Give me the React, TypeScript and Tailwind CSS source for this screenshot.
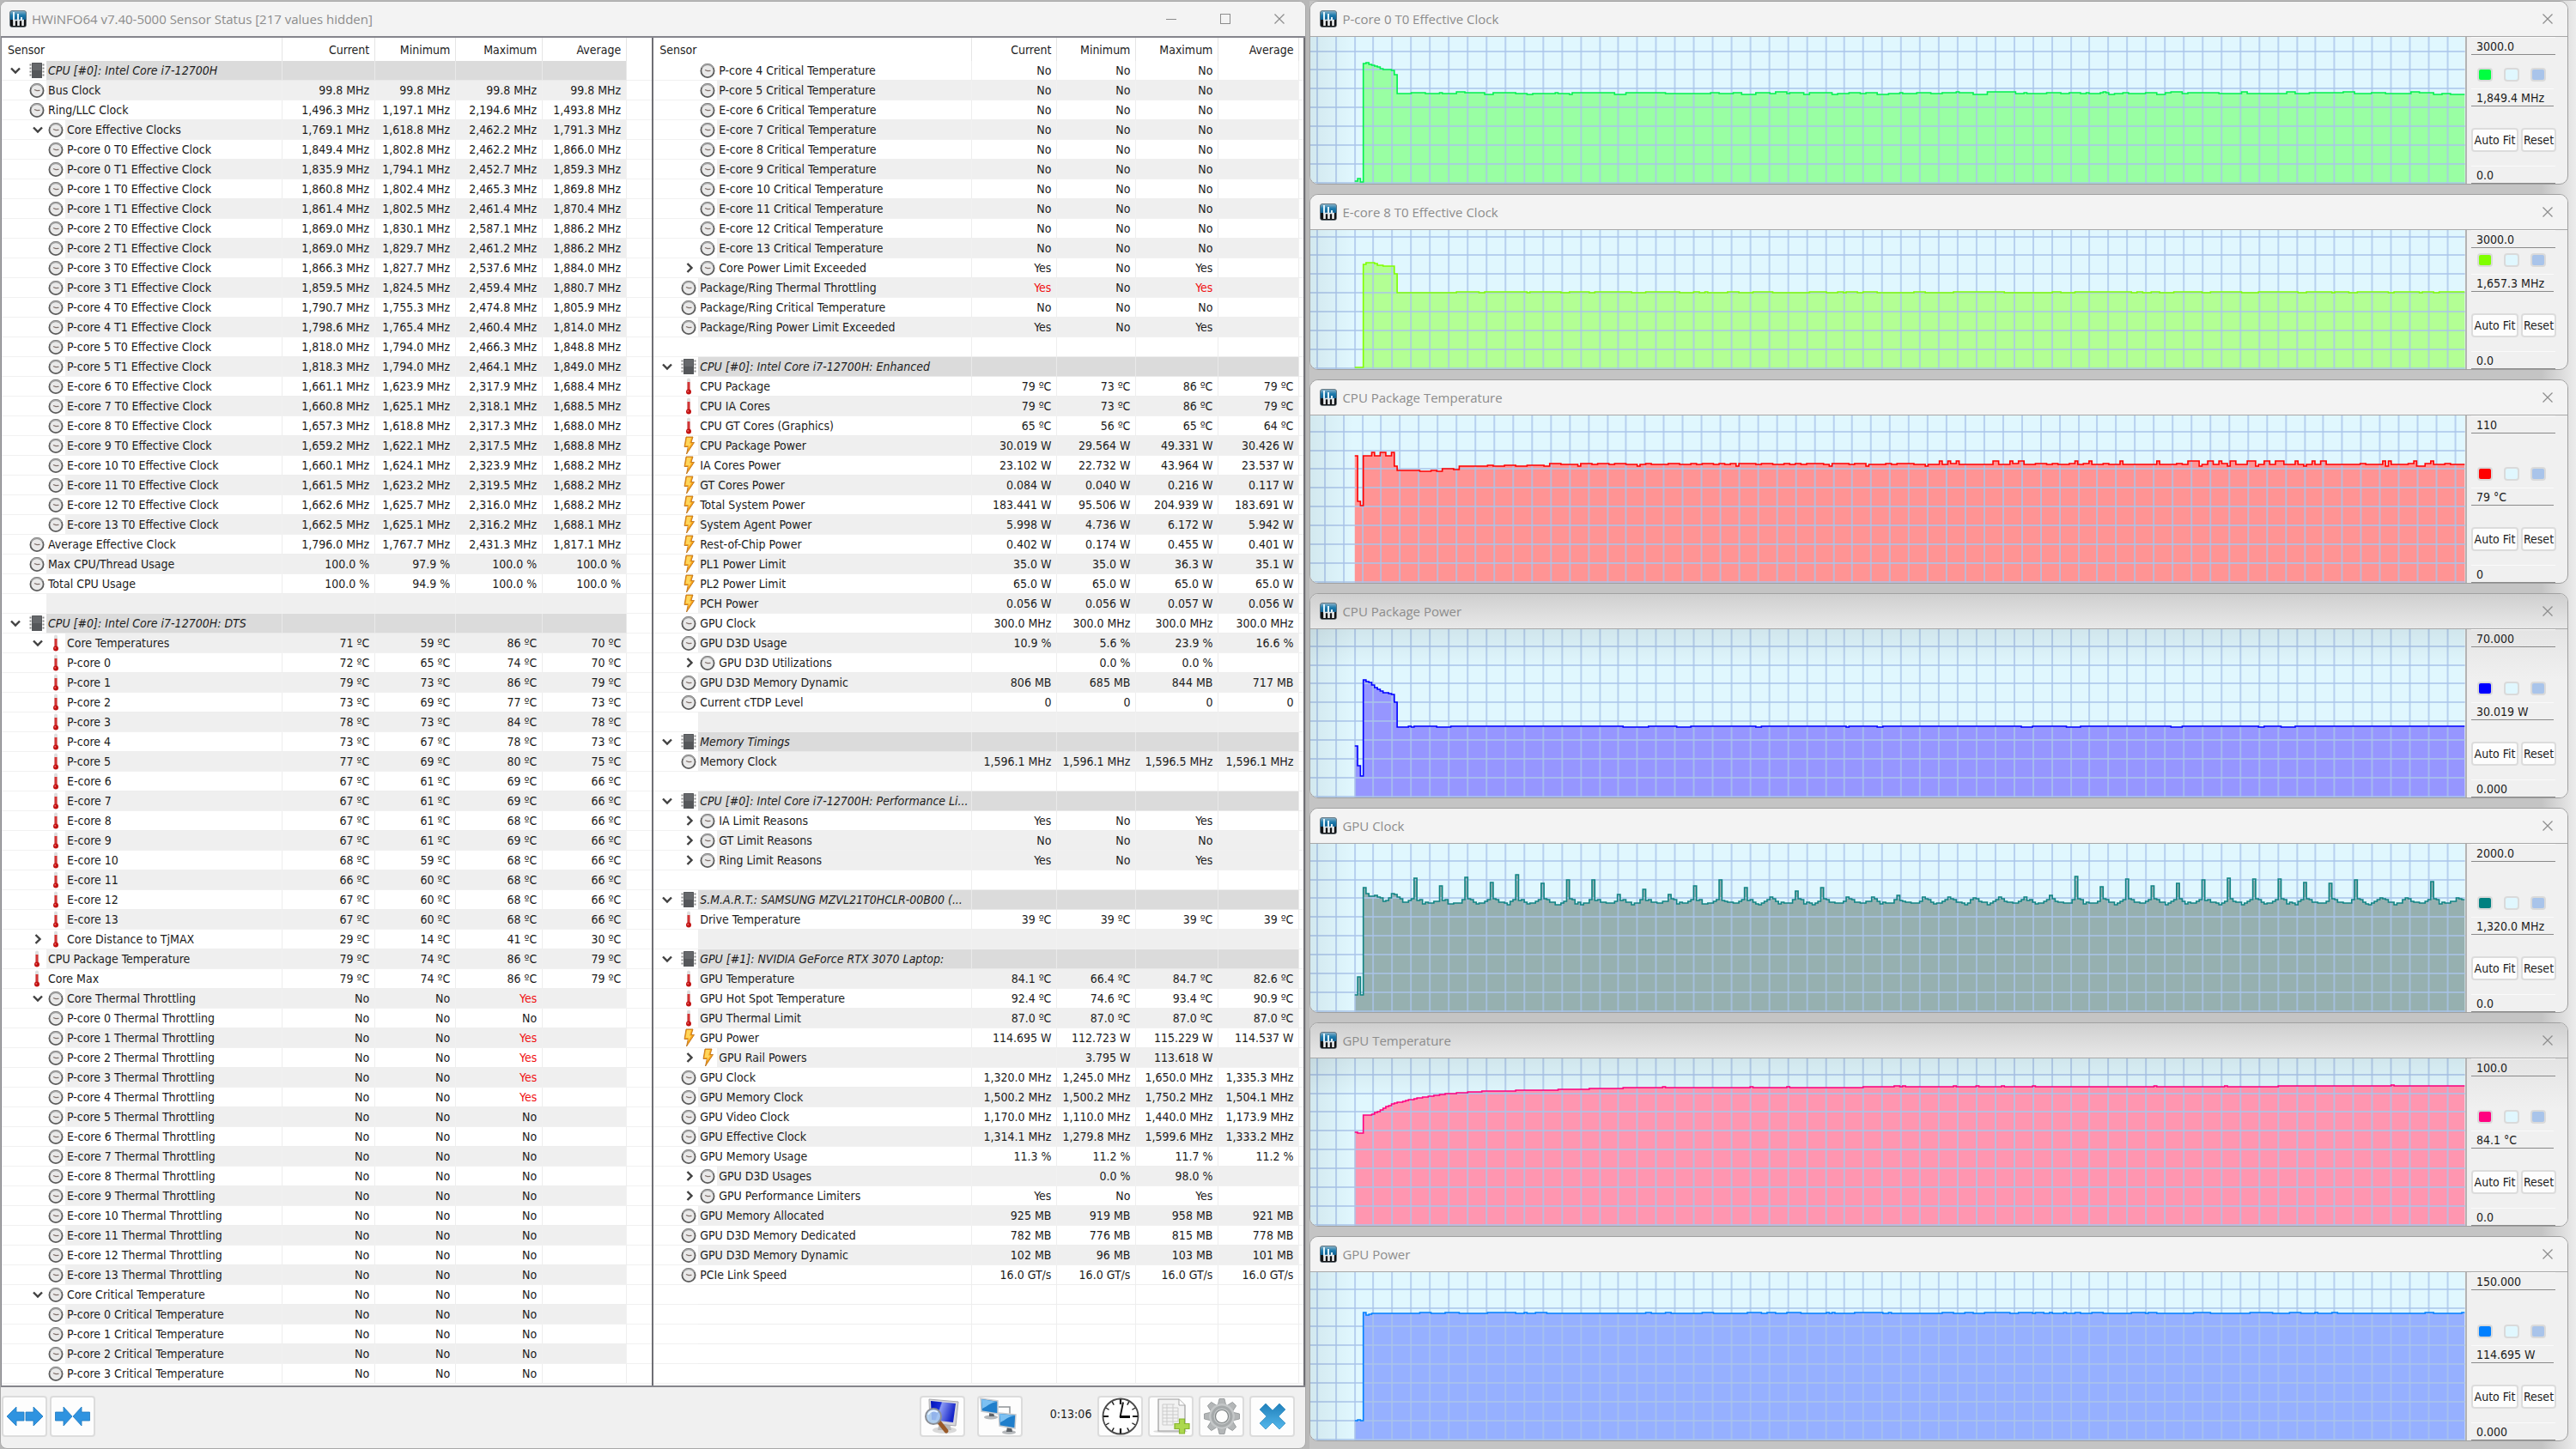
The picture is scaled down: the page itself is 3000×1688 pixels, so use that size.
import React from 'react';

type IconKind = 'chip' | 'clock' | 'temp' | 'power' | 'none';

interface SensorRow {
  icon: IconKind;
  level: number;
  name: string;
  values: string[];
  toggle?: 'open' | 'closed';
  shade: 'header' | 'grey' | 'white';
}

interface GraphWindow {
  title: string;
  height: string;
  line: string;
  fill: string;
  swatch: string;
  max: string;
  current: string;
  min: string;
  gridX: number;
  plotHeight: number;
  samples: number[];
  shaded?: boolean;
}

const SAMPLE_COUNT = 393;
const SAMPLE_STEP = 3.285;
const PLOT_START = 51.7;
const PLOT_WIDTH = 1343;

/* ---------- sensor data ---------- */

type Entry = [IconKind, number, string, string?, string?, ('open' | 'closed')?];

// values are separated by blanks, "-" is an empty cell, "!" marks an alert
const sensor = ([icon, level, name, values = '- - - -', unit = '', toggle]: Entry, shade: SensorRow['shade']): SensorRow => ({
  icon,
  level,
  name,
  toggle,
  shade,
  values: values.split(' ').map(v => (v === '-' ? '' : unit ? `${v} ${unit}` : v)),
});

const group = (name: string): Entry => ['chip', 0, name, undefined, undefined, 'open'];
const blank: Entry = ['none', 0, ''];

const P_CORES = [0, 1, 2, 3, 4, 5];
const E_CORES = [6, 7, 8, 9, 10, 11, 12, 13];
const CORES = [...P_CORES.map(n => `P-core ${n}`), ...E_CORES.map(n => `E-core ${n}`)];
const THREADS = [...P_CORES.flatMap(n => [`P-core ${n} T0`, `P-core ${n} T1`]), ...E_CORES.map(n => `E-core ${n} T0`)];

const threadClocks = [
  '1,849.4 1,802.8 2,462.2 1,866.0',
  '1,835.9 1,794.1 2,452.7 1,859.3',
  '1,860.8 1,802.4 2,465.3 1,869.8',
  '1,861.4 1,802.5 2,461.4 1,870.4',
  '1,869.0 1,830.1 2,587.1 1,886.2',
  '1,869.0 1,829.7 2,461.2 1,886.2',
  '1,866.3 1,827.7 2,537.6 1,884.0',
  '1,859.5 1,824.5 2,459.4 1,880.7',
  '1,790.7 1,755.3 2,474.8 1,805.9',
  '1,798.6 1,765.4 2,460.4 1,814.0',
  '1,818.0 1,794.0 2,466.3 1,848.8',
  '1,818.3 1,794.0 2,464.1 1,849.0',
  '1,661.1 1,623.9 2,317.9 1,688.4',
  '1,660.8 1,625.1 2,318.1 1,688.5',
  '1,657.3 1,618.8 2,317.3 1,688.0',
  '1,659.2 1,622.1 2,317.5 1,688.8',
  '1,660.1 1,624.1 2,323.9 1,688.2',
  '1,661.5 1,623.2 2,319.5 1,688.2',
  '1,662.6 1,625.7 2,316.0 1,688.2',
  '1,662.5 1,625.1 2,316.2 1,688.1',
];

const coreTemps = [
  '72 65 74 70', '79 73 86 79', '73 69 77 73', '78 73 84 78', '73 67 78 73', '77 69 80 75', '67 61 69 66',
  '67 61 69 66', '67 61 68 66', '67 61 69 66', '68 59 68 66', '66 60 68 66', '67 60 68 66', '67 60 68 66',
];

const leftEntries: Entry[] = [
  group('CPU [#0]: Intel Core i7-12700H'),
  ['clock', 1, 'Bus Clock', '99.8 99.8 99.8 99.8', 'MHz'],
  ['clock', 1, 'Ring/LLC Clock', '1,496.3 1,197.1 2,194.6 1,493.8', 'MHz'],
  ['clock', 2, 'Core Effective Clocks', '1,769.1 1,618.8 2,462.2 1,791.3', 'MHz', 'open'],
  ...THREADS.map((t, i): Entry => ['clock', 2, `${t} Effective Clock`, threadClocks[i], 'MHz']),
  ['clock', 1, 'Average Effective Clock', '1,796.0 1,767.7 2,431.3 1,817.1', 'MHz'],
  ['clock', 1, 'Max CPU/Thread Usage', '100.0 97.9 100.0 100.0', '%'],
  ['clock', 1, 'Total CPU Usage', '100.0 94.9 100.0 100.0', '%'],
  blank,
  group('CPU [#0]: Intel Core i7-12700H: DTS'),
  ['temp', 2, 'Core Temperatures', '71 59 86 70', 'ºC', 'open'],
  ...CORES.map((c, i): Entry => ['temp', 2, c, coreTemps[i], 'ºC']),
  ['temp', 2, 'Core Distance to TjMAX', '29 14 41 30', 'ºC', 'closed'],
  ['temp', 1, 'CPU Package Temperature', '79 74 86 79', 'ºC'],
  ['temp', 1, 'Core Max', '79 74 86 79', 'ºC'],
  ['clock', 2, 'Core Thermal Throttling', 'No No !Yes -', '', 'open'],
  ...CORES.map((c, i): Entry => ['clock', 2, `${c} Thermal Throttling`, i >= 1 && i <= 4 ? 'No No !Yes -' : 'No No No -']),
  ['clock', 2, 'Core Critical Temperature', 'No No No -', '', 'open'],
  ...CORES.slice(0, 4).map((c): Entry => ['clock', 2, `${c} Critical Temperature`, 'No No No -']),
];

const rightEntries: Entry[] = [
  ...CORES.slice(4).map((c): Entry => ['clock', 2, `${c} Critical Temperature`, 'No No No -']),
  ['clock', 2, 'Core Power Limit Exceeded', 'Yes No Yes -', '', 'closed'],
  ['clock', 1, 'Package/Ring Thermal Throttling', '!Yes No !Yes -'],
  ['clock', 1, 'Package/Ring Critical Temperature', 'No No No -'],
  ['clock', 1, 'Package/Ring Power Limit Exceeded', 'Yes No Yes -'],
  blank,
  group('CPU [#0]: Intel Core i7-12700H: Enhanced'),
  ['temp', 1, 'CPU Package', '79 73 86 79', 'ºC'],
  ['temp', 1, 'CPU IA Cores', '79 73 86 79', 'ºC'],
  ['temp', 1, 'CPU GT Cores (Graphics)', '65 56 65 64', 'ºC'],
  ['power', 1, 'CPU Package Power', '30.019 29.564 49.331 30.426', 'W'],
  ['power', 1, 'IA Cores Power', '23.102 22.732 43.964 23.537', 'W'],
  ['power', 1, 'GT Cores Power', '0.084 0.040 0.216 0.117', 'W'],
  ['power', 1, 'Total System Power', '183.441 95.506 204.939 183.691', 'W'],
  ['power', 1, 'System Agent Power', '5.998 4.736 6.172 5.942', 'W'],
  ['power', 1, 'Rest-of-Chip Power', '0.402 0.174 0.455 0.401', 'W'],
  ['power', 1, 'PL1 Power Limit', '35.0 35.0 36.3 35.1', 'W'],
  ['power', 1, 'PL2 Power Limit', '65.0 65.0 65.0 65.0', 'W'],
  ['power', 1, 'PCH Power', '0.056 0.056 0.057 0.056', 'W'],
  ['clock', 1, 'GPU Clock', '300.0 300.0 300.0 300.0', 'MHz'],
  ['clock', 1, 'GPU D3D Usage', '10.9 5.6 23.9 16.6', '%'],
  ['clock', 2, 'GPU D3D Utilizations', '- 0.0 0.0 -', '%', 'closed'],
  ['clock', 1, 'GPU D3D Memory Dynamic', '806 685 844 717', 'MB'],
  ['clock', 1, 'Current cTDP Level', '0 0 0 0'],
  blank,
  group('Memory Timings'),
  ['clock', 1, 'Memory Clock', '1,596.1 1,596.1 1,596.5 1,596.1', 'MHz'],
  blank,
  group('CPU [#0]: Intel Core i7-12700H: Performance Li...'),
  ['clock', 2, 'IA Limit Reasons', 'Yes No Yes -', '', 'closed'],
  ['clock', 2, 'GT Limit Reasons', 'No No No -', '', 'closed'],
  ['clock', 2, 'Ring Limit Reasons', 'Yes No Yes -', '', 'closed'],
  blank,
  group('S.M.A.R.T.: SAMSUNG MZVL21T0HCLR-00B00 (...'),
  ['temp', 1, 'Drive Temperature', '39 39 39 39', 'ºC'],
  blank,
  group('GPU [#1]: NVIDIA GeForce RTX 3070 Laptop:'),
  ['temp', 1, 'GPU Temperature', '84.1 66.4 84.7 82.6', 'ºC'],
  ['temp', 1, 'GPU Hot Spot Temperature', '92.4 74.6 93.4 90.9', 'ºC'],
  ['temp', 1, 'GPU Thermal Limit', '87.0 87.0 87.0 87.0', 'ºC'],
  ['power', 1, 'GPU Power', '114.695 112.723 115.229 114.537', 'W'],
  ['power', 2, 'GPU Rail Powers', '- 3.795 113.618 -', 'W', 'closed'],
  ['clock', 1, 'GPU Clock', '1,320.0 1,245.0 1,650.0 1,335.3', 'MHz'],
  ['clock', 1, 'GPU Memory Clock', '1,500.2 1,500.2 1,750.2 1,504.1', 'MHz'],
  ['clock', 1, 'GPU Video Clock', '1,170.0 1,110.0 1,440.0 1,173.9', 'MHz'],
  ['clock', 1, 'GPU Effective Clock', '1,314.1 1,279.8 1,599.6 1,333.2', 'MHz'],
  ['clock', 1, 'GPU Memory Usage', '11.3 11.2 11.7 11.2', '%'],
  ['clock', 2, 'GPU D3D Usages', '- 0.0 98.0 -', '%', 'closed'],
  ['clock', 2, 'GPU Performance Limiters', 'Yes No Yes -', '', 'closed'],
  ['clock', 1, 'GPU Memory Allocated', '925 919 958 921', 'MB'],
  ['clock', 1, 'GPU D3D Memory Dedicated', '782 776 815 778', 'MB'],
  ['clock', 1, 'GPU D3D Memory Dynamic', '102 96 103 101', 'MB'],
  ['clock', 1, 'PCIe Link Speed', '16.0 16.0 16.0 16.0', 'GT/s'],
];

const leftRows = leftEntries.map((e, i) => sensor(e, e[0] === 'chip' ? 'header' : i % 2 ? 'grey' : 'white'));

// the stripes change parity after the limit reasons (row 40)
const rightRows = [
  ...rightEntries.map((e, i) => sensor(e, e[0] === 'chip' ? 'header' : (i < 40 ? i % 2 === 1 : i % 2 === 0) ? 'grey' : 'white')),
  ...Array.from({ length: 5 }, () => sensor(blank, 'white')),
];

/* ---------- graph data ---------- */

const noise = (seed: number) => {
  let s = seed;
  return () => {
    s = (s * 1664525 + 1013904223) % 4294967296;
    return s / 4294967296;
  };
};

// holds each level for a few samples so that the line stays stepped
const steady = (head: number[], base: number, levels: number[], seed: number) => {
  const rnd = noise(seed);
  const out = [...head];
  while (out.length < SAMPLE_COUNT) {
    const value = base + levels[Math.floor(rnd() * levels.length)];
    const hold = 1 + Math.floor(rnd() * 5);
    for (let i = 0; i < hold; i++) out.push(value);
  }
  return out.slice(0, SAMPLE_COUNT);
};

const packageTemperature = () => {
  const rnd = noise(11);
  const out = [147, 94, 89, 147, 147, 147, 151, 147, 147, 151, 151, 147, 147, 151, 135];
  while (out.length < SAMPLE_COUNT) {
    const i = out.length;
    const base = i < 30 ? 129 : i < 36 ? 131 : i < 42 ? 134 : i < 68 ? 135 : 137;
    const r = rnd();
    const high = i > 200 ? 0.28 : 0.02;
    if (i > 110 && r < high) out.push(base + 4, ...(rnd() > 0.7 ? [base + 4] : []));
    else if (r < 0.45) out.push(base + 1, base + 1);
    else if (r > 0.93) out.push(base - 2);
    else out.push(base, base);
  }
  return out.slice(0, SAMPLE_COUNT);
};

const gpuPeaks = [
  155, 146, 156, 150, 159, 149, 153, 153, 136, 142, 136, 146, 153, 144, 133, 140, 144, 133, 133, 135, 133,
  133, 132, 133, 133, 135, 157, 145, 154, 146, 149, 153, 155, 154, 154, 150, 149, 153, 132, 132, 151, 132,
];

const gpuClock = () => {
  const rnd = noise(5);
  const shape = [0, 131, 130, 127, 127, 126, 126, 128, 130];
  const out = [19, 40, 19, 144, 137, 134, 134, 135, 133, 132, 128, 129, 132, 137, 136, 133, 131, 127, 127, 129, 131];
  while (out.length < SAMPLE_COUNT) {
    const k = out.length - 21;
    const phase = k % 9;
    if (phase === 0) out.push(gpuPeaks[Math.floor(k / 9)] ?? 132);
    else out.push(shape[phase] + (rnd() < 0.25 ? -2 : 0));
  }
  return out;
};

const gpuTemperature = () => {
  const rnd = noise(3);
  const knots = [[6, 129], [9, 134], [13, 141], [21, 147], [33, 153], [47, 156], [66, 157], [100, 160], [260, 161], [393, 162]];
  const out = [108, 107, 107, 128, 128, 128];
  while (out.length < SAMPLE_COUNT) {
    const i = out.length;
    const k = knots.findIndex(([x]) => x > i);
    const [x0, y0] = knots[k - 1];
    const [x1, y1] = knots[k];
    out.push(Math.round(y0 + ((y1 - y0) * (i - x0)) / (x1 - x0)) + (i > 100 && rnd() < 0.06 ? 1 : 0));
  }
  return out;
};

const graphs: GraphWindow[] = [
  {
    title: 'P-core 0 T0 Effective Clock', height: 'h-[214px]', line: '#00f050', fill: '#99ffa3', swatch: 'bg-[#00ff40]',
    max: '3000.0', current: '1,849.4 MHz', min: '0.0', gridX: 7.7, plotHeight: 171,
    samples: steady([2, 5, 1, 139, 140, 138, 137, 136, 135, 133, 132, 132, 132, 131, 126], 104, [0, 0, 1, 1, 1, 0, -1, 2], 7),
  },
  {
    title: 'E-core 8 T0 Effective Clock', height: 'h-[205px]', line: '#80ff00', fill: '#b3ff94', swatch: 'bg-[#80ff00]',
    max: '3000.0', current: '1,657.3 MHz', min: '0.0', gridX: 7.7, plotHeight: 162,
    samples: steady([1, 1, 1, 121, 123, 123, 123, 122, 120, 120, 119, 119, 119, 119, 110], 88, [0, 0, 1, 1, 1], 21),
  },
  {
    title: 'CPU Package Temperature', height: 'h-[238px]', line: '#ff0000', fill: '#ff9494', swatch: 'bg-[#ff0000]',
    max: '110', current: '79 °C', min: '0', gridX: 16.7, plotHeight: 195,
    samples: packageTemperature(),
  },
  {
    title: 'CPU Package Power', height: 'h-[239px]', line: '#0000ff', fill: '#9696ff', swatch: 'bg-[#0000ff]',
    max: '70.000', current: '30.019 W', min: '0.000', gridX: 7.7, plotHeight: 196, shaded: true,
    samples: steady([59, 36, 24, 136, 134, 133, 130, 127, 125, 123, 121, 121, 120, 119, 110, 81, 81, 81, 81], 82, [0, 0, 0, 0, 0, 0, -1], 9),
  },
  {
    title: 'GPU Clock', height: 'h-[239px]', line: '#108484', fill: '#96b0b0', swatch: 'bg-[#008080]',
    max: '2000.0', current: '1,320.0 MHz', min: '0.0', gridX: 7.7, plotHeight: 196,
    samples: gpuClock(),
  },
  {
    title: 'GPU Temperature', height: 'h-[238px]', line: '#ff0080', fill: '#ff96b0', swatch: 'bg-[#ff0080]',
    max: '100.0', current: '84.1 °C', min: '0.0', gridX: 7.7, plotHeight: 195, shaded: true,
    samples: gpuTemperature(),
  },
  {
    title: 'GPU Power', height: 'h-[239px]', line: '#0080ff', fill: '#96b0ff', swatch: 'bg-[#0080ff]',
    max: '150.000', current: '114.695 W', min: '0.000', gridX: 7.7, plotHeight: 196,
    samples: steady([22, 23, 22, 148, 145, 146], 147, [0, 0, 0, 1, 1], 33),
  },
];

/* ---------- icons ---------- */

const AppIcon = () => (
  <svg viewBox="0 0 20 20" className="h-5 w-5 shrink-0">
    <defs>
      <linearGradient id="appTop" x1="0" y1="0" x2="0" y2="1">
        <stop offset="0" stopColor="#8fb4c8" />
        <stop offset="0.5" stopColor="#1f7cae" />
        <stop offset="1" stopColor="#0f5f90" />
      </linearGradient>
    </defs>
    <rect x="0.5" y="0.5" width="19" height="19" rx="2.5" fill="#101214" />
    <path d="M3 .5h14A2.500 2.500 0 0 1 19.500 3v8H.5V3A2.500 2.500 0 0 1 3 .5z" fill="url(#appTop)" />
    <path d="M5 2v9M10 4v7M14 8v3" stroke="#e4f4fb" strokeWidth="2" />
    <path d="M4 11.500h13" stroke="#dfe6ea" strokeWidth="1.500" />
    <path d="M5.500 12v6M10.500 12v6M15.500 12v6" stroke="#eef0f1" strokeWidth="2.600" />
    <rect x="0.5" y="0.5" width="19" height="19" rx="2.5" fill="none" stroke="#5d6c76" strokeOpacity=".6" />
  </svg>
);

const ClockIcon = () => (
  <svg viewBox="0 0 18 19" className="h-[19px] w-[18px]">
    <circle cx="9" cy="9.500" r="7.600" fill="#e9e9e9" stroke="#5c5c5c" strokeWidth="1.800" />
    <path d="M2.500 6A7.600 7.600 0 0 1 15.500 6" fill="none" stroke="#a2a2a2" strokeWidth="1.800" />
    <path d="M6 8.500l3 1.200 3.500-.4" fill="none" stroke="#80706a" strokeWidth="1.300" />
  </svg>
);

const ChipIcon = () => (
  <svg viewBox="0 0 18 20" className="h-5 w-[18px]">
    <path d="M1.500 2.500v15M16.500 2.500v15" stroke="#8a8a8a" strokeWidth="2" strokeDasharray="2 2" />
    <rect x="3" y="1" width="12" height="18" rx="0.5" fill="#55575a" />
    <rect x="4" y="2" width="10" height="8" fill="#66686b" />
  </svg>
);

const TempIcon = () => (
  <svg viewBox="0 0 18 20" className="h-5 w-[18px]">
    <rect x="7" y="0.5" width="4" height="15" rx="2" fill="#dedede" />
    <rect x="7.500" y="5" width="3" height="11" fill="#d43434" />
    <circle cx="9" cy="16.500" r="3" fill="#c21414" />
    <circle cx="8.200" cy="15.800" r="0.9" fill="#ee7070" />
  </svg>
);

const PowerIcon = () => (
  <svg viewBox="0 0 18 22" className="h-[22px] w-[18px]">
    <path d="M6 1h8l-2 6.500h3.500L6.500 21l1.800-8.500H4z" fill="#f6a21c" stroke="#b86a10" strokeWidth="0.8" />
    <path d="M7 2h5l-2 6.500h2.500L8 15l1-4H5.500z" fill="#ffd65c" />
  </svg>
);

const RowIcon = ({ kind }: { kind: IconKind }) => {
  if (kind === 'chip') return <ChipIcon />;
  if (kind === 'clock') return <ClockIcon />;
  if (kind === 'temp') return <TempIcon />;
  if (kind === 'power') return <PowerIcon />;
  return null;
};

const CloseIcon = () => (
  <svg viewBox="0 0 12 12" className="h-3 w-3">
    <path d="M0.500 0.500l11 11M11.500 0.500l-11 11" stroke="#8c8c8c" strokeWidth="1.200" />
  </svg>
);

const ExpandIcon = () => (
  <svg viewBox="0 0 46 26" className="h-[26px] w-[46px]">
    <path d="M2 13L13 2v6h9v10h-9v6z" fill="#2f93e0" stroke="#1d78c0" strokeWidth="0.8" />
    <path d="M44 13L33 2v6h-9v10h9v6z" fill="#2f93e0" stroke="#1d78c0" strokeWidth="0.8" />
  </svg>
);

const CollapseIcon = () => (
  <svg viewBox="0 0 46 26" className="h-[26px] w-[46px]">
    <path d="M22 13L12 2v6H2.500v10H12v6z" fill="#2f93e0" stroke="#1d78c0" strokeWidth="0.8" />
    <path d="M23 13L33 2v6h9.500v10H33v6z" fill="#2f93e0" stroke="#1d78c0" strokeWidth="0.8" />
  </svg>
);

const InspectIcon = () => (
  <svg viewBox="0 0 46 44" className="h-11 w-[46px]">
    <defs>
      <linearGradient id="crt" x1="0" y1="0" x2="1" y2="0.3">
        <stop offset="0" stopColor="#0010b8" />
        <stop offset="0.4" stopColor="#1a2fd8" />
        <stop offset="0.45" stopColor="#8d9cf4" />
        <stop offset="1" stopColor="#1423c8" />
      </linearGradient>
    </defs>
    <ellipse cx="26" cy="38" rx="14" ry="4" fill="#d9d9d9" />
    <path d="M20 30h12l2 8H18z" fill="#b9b9b9" />
    <path d="M8 2l34 3-3 28-30-3z" fill="#d6d6da" stroke="#a9a9ae" />
    <path d="M10 4l29 3-3 22-25-3z" fill="url(#crt)" />
    <path d="M20 29l8 10" stroke="#9a5a28" strokeWidth="5" strokeLinecap="round" />
    <circle cx="13" cy="22" r="9" fill="#a9cdf0" fillOpacity=".85" stroke="#8b8f96" strokeWidth="2" />
    <path d="M7 20a7 7 0 0 1 11-3" stroke="#e8f4ff" strokeWidth="2" fill="none" />
  </svg>
);

const NetworkIcon = () => (
  <svg viewBox="0 0 46 44" className="h-11 w-[46px]">
    <path d="M22 11h13v10" stroke="#8e9296" strokeWidth="1.500" fill="none" />
    <ellipse cx="13" cy="23" rx="8" ry="2.500" fill="#b5b8bb" />
    <path d="M11 17h5l1 5h-6z" fill="#5b6066" />
    <path d="M1 1l20 3v15L2 16z" fill="#1f7ecb" stroke="#c9ccd0" strokeWidth="1.500" />
    <path d="M2 2l18 3C12 6 9 10 3 13z" fill="#7cc0f2" />
    <ellipse cx="34" cy="40.500" rx="8" ry="2.500" fill="#b5b8bb" />
    <path d="M32 34h5l1 6h-7z" fill="#5b6066" />
    <path d="M22 18l20 2-1 16-18-3z" fill="#1f7ecb" stroke="#c9ccd0" strokeWidth="1.500" />
    <path d="M23 19l18 2c-8 1-11 5-17 8z" fill="#7cc0f2" />
  </svg>
);

const TimerIcon = () => (
  <svg viewBox="0 0 46 46" className="h-[46px] w-[46px]">
    <circle cx="23" cy="23" r="20.500" fill="#fff" stroke="#4a4a4a" strokeWidth="1.800" />
    {Array.from({ length: 12 }, (_, i) => (
      <path key={i} d={i % 3 ? 'M23 3.500v4' : 'M23 3v6'} stroke="#1a1a1a" strokeWidth={i % 3 ? 1.4 : 2.2} transform={`rotate(${i * 30} 23 23)`} />
    ))}
    <path d="M22.500 24L26 6.500" stroke="#1a1a1a" strokeWidth="2" />
    <path d="M22 23.500h12" stroke="#0a0a0a" strokeWidth="3" />
  </svg>
);

const LogIcon = () => (
  <svg viewBox="0 0 46 44" className="h-11 w-[46px]">
    <ellipse cx="22" cy="39.500" rx="20" ry="1.800" fill="#dcdcdc" />
    <path d="M8 2h24l7 7v30H8z" fill="#f2f2f2" stroke="#9c9c9c" strokeWidth="1.200" />
    <path d="M32 2v7h7" fill="#fff" stroke="#a8a8a8" />
    <path d="M13 8h14M13 12h18M13 16h18M13 20h18M13 24h18M13 28h18M13 32h12M13 8v24M18 8v24M25 8v24M31 12v16" stroke="#cbcbcb" strokeWidth="1" />
    <path d="M32.500 25h6v5.500H44v6h-5.500V42h-6v-5.500H27v-6h5.500z" fill="#acd84e" stroke="#86b42e" strokeWidth="1.200" />
  </svg>
);

const GearIcon = () => (
  <svg viewBox="0 0 46 46" className="h-[46px] w-[46px]">
    {Array.from({ length: 8 }, (_, i) => (
      <path key={i} d="M18.500 9l1.500-6.500h6L27.500 9z" fill="#b3b6b7" stroke="#8e9293" strokeWidth="0.8" transform={`rotate(${i * 45} 23 23)`} />
    ))}
    <circle cx="23" cy="23" r="15" fill="#c4c7c8" />
    <circle cx="23" cy="23" r="11" fill="none" stroke="#a5a9aa" strokeWidth="3" />
    <circle cx="23" cy="23" r="7.500" fill="#fdfdfd" stroke="#7d8283" strokeWidth="1.200" />
  </svg>
);

const QuitIcon = () => (
  <svg viewBox="0 0 32 32" className="h-8 w-8">
    <defs>
      <linearGradient id="quit" x1="0" y1="0" x2="0" y2="1">
        <stop offset="0" stopColor="#1f7fba" />
        <stop offset="1" stopColor="#55b8ec" />
      </linearGradient>
    </defs>
    <path d="M8 1l8 8 8-8 7 7-8 8 8 8-7 7-8-8-8 8-7-7 8-8-8-8z" fill="url(#quit)" stroke="#3d93c4" strokeWidth="0.8" strokeLinejoin="round" />
  </svg>
);

/* ---------- sensor list ---------- */

const Toggle = ({ state, name }: { state: 'open' | 'closed'; name: string }) => (
  <button aria-label={`Toggle ${name}`} className="flex h-4 w-4 items-center justify-center">
    <svg viewBox="0 0 14 14" className="h-[14px] w-[14px]">
      <path d={state === 'open' ? 'M2 4.500L7 9.500L12 4.500' : 'M4.500 2L9.500 7L4.500 12'} fill="none" stroke="#404040" strokeWidth="2.400" />
    </svg>
  </button>
);

const shades = {
  header: 'bg-[#dbdbdb] border-[#e9e9e9]',
  grey: 'bg-[#efefef] border-[#f1f1f1]',
  white: 'bg-white border-[#eeeeee]',
};

const SensorTable = ({ rows, columns }: { rows: SensorRow[]; columns: string[] }) => (
  <table className="w-full table-fixed border-separate border-spacing-0">
    <colgroup>
      <col />
      {columns.map((c, i) => <col key={i} className={c} />)}
    </colgroup>
    <thead>
      <tr>
        <th className="h-[27px] border-r border-[#e5e5e5] pl-[7px] text-left font-normal">Sensor</th>
        {['Current', 'Minimum', 'Maximum', 'Average'].map(h => (
          <th key={h} className="border-r border-[#e5e5e5] pr-[6px] text-right font-normal">{h}</th>
        ))}
        <td></td>
      </tr>
    </thead>
    <tbody>
      {rows.map((row, i) => (
        <tr key={i}>
          <td className="h-[23px] p-0">
            <div className="flex h-[23px]">
              <div className={`flex shrink-0 items-center border-b border-[#f1f1f1] pr-1 ${row.level === 2 ? 'w-[54px] justify-end' : 'w-[32px] justify-start pl-2'}`}>
                {row.toggle && <Toggle state={row.toggle} name={row.name} />}
              </div>
              <div className="flex w-5 shrink-0 items-center border-b border-[#f1f1f1]">
                <RowIcon kind={row.icon} />
              </div>
              <div className={`flex min-w-0 flex-1 items-center border-r border-b pl-[2px] whitespace-nowrap ${shades[row.shade]} ${row.shade === 'header' ? 'italic' : ''}`}>
                {row.name}
              </div>
            </div>
          </td>
          {row.values.map((v, c) => (
            <td key={c} className={`border-r border-b p-0 pr-[6px] text-right whitespace-nowrap ${shades[row.shade]} ${v.startsWith('!') ? 'text-[#f01010]' : ''}`}>
              {v.replace('!', '')}
            </td>
          ))}
          <td className="border-b border-[#f1f1f1] p-0"></td>
        </tr>
      ))}
    </tbody>
  </table>
);

const ToolButton = ({ label, children }: { label: string; children: React.ReactNode }) => (
  <button aria-label={label} className="flex h-12 w-[53px] shrink-0 items-center justify-center rounded-sm border-2 border-[#dcdcdc] bg-[#fdfdfd]">
    {children}
  </button>
);

const SensorWindow = () => (
  <section className="flex min-w-0 flex-[1525] flex-col overflow-hidden rounded-lg border border-[#a8a8a8] bg-[#f0f0f0]">
    <header className="flex h-10 shrink-0 items-center gap-[6px] bg-[#f3f3f3] pr-6 pl-[10px]">
      <AppIcon />
      <h1 className="flex-1 font-['Open_Sans',sans-serif] text-[15px] text-[#8c8c8c]">HWiNFO64 v7.40-5000 Sensor Status [217 values hidden]</h1>
      <div className="flex items-center gap-[51px]">
        <button aria-label="Minimize" className="flex h-3 w-3 items-center"><span className="h-px w-3 bg-[#8c8c8c]"></span></button>
        <button aria-label="Maximize" className="h-3 w-3 border border-[#8c8c8c]"></button>
        <button aria-label="Close"><CloseIcon /></button>
      </div>
    </header>
    <div className="flex flex-1 border-y-2 border-[#85858c] bg-white">
      <div className="flex-1 border-l border-[#85858c]">
        <SensorTable rows={leftRows} columns={['w-[108px]', 'w-[94px]', 'w-[101px]', 'w-[98px]', 'w-[29px]']} />
      </div>
      <div className="flex-1 border-x-2 border-[#6e6e74]">
        <SensorTable rows={rightRows} columns={['w-[99px]', 'w-[92px]', 'w-[96px]', 'w-[94px]', 'w-[5px]']} />
      </div>
    </div>
    <footer className="flex h-[71px] shrink-0 items-start justify-between pt-[10px] pr-3 pl-px">
      <div className="flex gap-[3px]">
        <ToolButton label="Expand columns"><ExpandIcon /></ToolButton>
        <ToolButton label="Collapse columns"><CollapseIcon /></ToolButton>
      </div>
      <div className="flex items-start">
        <div className="flex gap-[14px]">
          <ToolButton label="System summary"><InspectIcon /></ToolButton>
          <ToolButton label="Remote monitoring"><NetworkIcon /></ToolButton>
        </div>
        <time className="mr-[7px] ml-8 leading-[42px]">0:13:06</time>
        <div className="flex gap-[6px]">
          <ToolButton label="Reset timer"><TimerIcon /></ToolButton>
          <ToolButton label="Start logging"><LogIcon /></ToolButton>
          <ToolButton label="Settings"><GearIcon /></ToolButton>
          <ToolButton label="Close sensors"><QuitIcon /></ToolButton>
        </div>
      </div>
    </footer>
  </section>
);

/* ---------- graph windows ---------- */

const Plot = ({ graph }: { graph: GraphWindow }) => {
  const { plotHeight: h, samples } = graph;
  const bottom = h - 1;
  const steps = samples
    .map((v, i) => {
      const x0 = (PLOT_START + i * SAMPLE_STEP).toFixed(1);
      const x1 = (PLOT_START + (i + 1) * SAMPLE_STEP).toFixed(1);
      return `${x0},${bottom - v} ${x1},${bottom - v}`;
    })
    .join(' ');
  const columns = Array.from({ length: 62 }, (_, i) => Math.round(graph.gridX + i * 21.92));
  const lines = Array.from({ length: 9 }, (_, i) => Math.round(bottom - i * 21.92)).filter(y => y > 0);

  return (
    <svg viewBox={`0 0 ${PLOT_WIDTH} ${h}`} preserveAspectRatio="none" className="block h-full w-full">
      <defs>
        <linearGradient id="shadeTop" x1="0" y1="0" x2="0" y2="1">
          <stop offset="0" stopColor="#000" stopOpacity="0.07" />
          <stop offset="1" stopColor="#000" stopOpacity="0" />
        </linearGradient>
        <linearGradient id="shadeLeft" x1="0" y1="0" x2="1" y2="0">
          <stop offset="0" stopColor="#000" stopOpacity="0.06" />
          <stop offset="1" stopColor="#000" stopOpacity="0" />
        </linearGradient>
      </defs>
      <rect width={PLOT_WIDTH} height={h} fill="#e0f7fe" />
      <polygon points={`${PLOT_START},${h} ${steps} ${PLOT_WIDTH},${h}`} fill={graph.fill} />
      {columns.map(x => <rect key={x} x={x - 1} y="0" width="2" height={h} fill="#a9c4ea" fillOpacity="0.75" />)}
      {lines.map(y => <rect key={y} x="0" y={y - 1} width={PLOT_WIDTH} height="2" fill="#a9c4ea" fillOpacity="0.75" />)}
      <polyline points={steps} fill="none" stroke={graph.line} strokeWidth="1.600" />
      <rect width="50" height={h} fill="url(#shadeLeft)" />
      {graph.shaded && <rect width={PLOT_WIDTH} height="45" fill="url(#shadeTop)" />}
    </svg>
  );
};

const Readout = ({ label, value, width }: { label: string; value: string; width: string }) => (
  <input
    aria-label={label}
    defaultValue={value}
    className={`h-[21px] border-t border-b border-t-[#fafafa] border-b-[#8a8a8a] bg-transparent pl-[6px] outline-none ${width}`}
  />
);

const Swatch = ({ label, color }: { label: string; color: string }) => (
  <button aria-label={label} className={`h-4 w-[18px] rounded-sm border-2 border-[#dadada] ${color}`}></button>
);

const Graph = ({ graph }: { graph: GraphWindow }) => (
  <section className={`flex flex-col overflow-hidden rounded-[10px] border border-[#a0a0a0] bg-[#f0f0f0] ${graph.height}`}>
    <header className={`flex h-10 shrink-0 items-center gap-[6px] pr-[17px] pl-[11px] ${graph.shaded ? 'bg-linear-to-b from-[#cfcfcf] to-[#e8e8e8]' : 'bg-[#f3f3f3]'}`}>
      <AppIcon />
      <h2 className="flex-1 font-['Open_Sans',sans-serif] text-[15px] text-[#8c8c8c]">{graph.title}</h2>
      <button aria-label={`Close ${graph.title}`}><CloseIcon /></button>
    </header>
    <div className="flex min-h-0 flex-1 border-t border-[#a8a8a8]">
      <div className="min-w-0 flex-1 border-r-2 border-[#b4b4b4]">
        <Plot graph={graph} />
      </div>
      <div className={`flex w-[117px] shrink-0 flex-col justify-between pl-[5px] ${graph.shaded ? 'bg-linear-to-b from-[#e4e4e4] to-[#f0f0f0] to-30%' : ''}`}>
        <Readout label="Graph maximum" value={graph.max} width="w-[98px]" />
        <div className="flex flex-col">
          <div className="flex gap-[13px] pl-[7px]">
            <Swatch label="Line color" color={graph.swatch} />
            <Swatch label="Background color" color="bg-[#e0f7fe]" />
            <Swatch label="Grid color" color="bg-[#a9c4ea]" />
          </div>
          <div className="pt-2">
            <Readout label="Current value" value={graph.current} width="w-24" />
          </div>
          <div className="flex gap-[3px] pt-[25px] pb-4">
            <button className="h-7 w-[55px] rounded-sm border-2 border-[#dcdcdc] bg-[#fdfdfd] whitespace-nowrap">Auto Fit</button>
            <button className="h-7 w-[41px] rounded-sm border-2 border-[#dcdcdc] bg-[#fdfdfd]">Reset</button>
          </div>
          <Readout label="Graph minimum" value={graph.min} width="w-[98px]" />
        </div>
      </div>
    </div>
  </section>
);

export default function App() {
  return (
    <main className="flex min-h-screen gap-1 bg-[#b8b8b8] pt-px font-['DejaVu_Sans_Condensed','Noto_Sans',sans-serif] text-[14px] leading-[20px] text-[#1c1c1c]">
      <SensorWindow />
      <aside className="flex min-w-0 flex-[1471] flex-col gap-[11px] bg-[linear-gradient(to_right,#c4c4c4_calc(100%-40px),#ececec)] pr-[9px]">
        {graphs.map(g => <Graph key={g.title} graph={g} />)}
      </aside>
    </main>
  );
}
